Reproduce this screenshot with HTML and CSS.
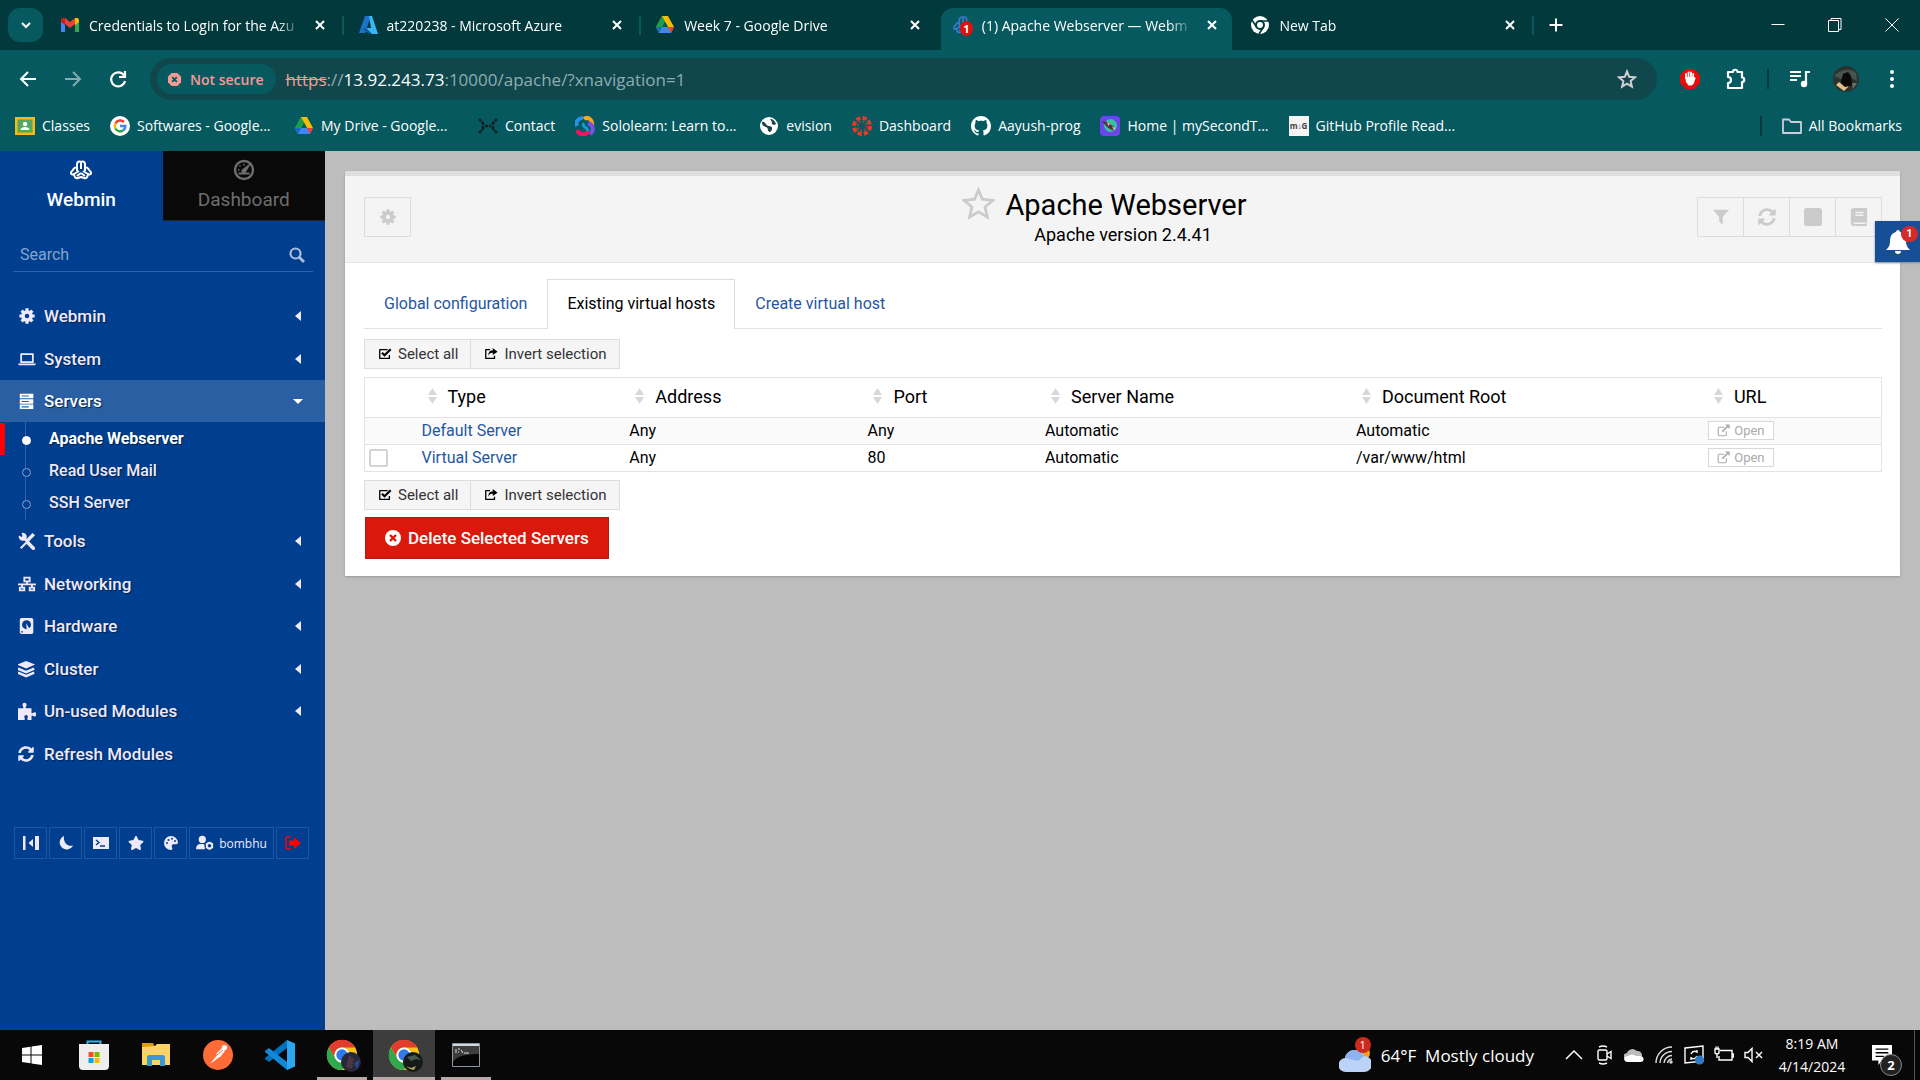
FILE: index.html
```html
<!DOCTYPE html>
<html lang="en">
<head>
<meta charset="utf-8">
<title>(1) Apache Webserver — Webmin</title>
<link rel="stylesheet" href="styles.css">
</head>
<body>

<!-- Shared icon shapes -->
<svg class="defs" aria-hidden="true">
  <symbol id="close" viewBox="0 0 20 20"><path d="M6 6l8 8M14 6l-8 8" fill="none" stroke="currentColor" stroke-width="2"/></symbol>
  <symbol id="drive" viewBox="0 0 20 20"><path d="M7 1h6L10 7 4 18 1 12z" fill="#34a853"/><path d="M7 1h6l6 11h-6L10 7z" fill="#fbbc04"/><path d="M1 12h18l-3 6H4z" fill="#4285f4"/><path d="M13 12h6l-3 6z" fill="#ea4335"/><path d="M10 6.500l3 5.500H7z" fill="#05595f"/><path d="M7 1l3 5.500L4 18l-3-6z" fill="#1e9e4a"/><path d="M1 12l3 6 3-6z" fill="#1967d2"/></symbol>
  <symbol id="cog" viewBox="0 0 20 20"><circle cx="10" cy="10" r="4.500" fill="none" stroke="currentColor" stroke-width="4"/><path d="M10 1.500v3M10 15.500v3M1.500 10h3M15.500 10h3M4 4l2 2M14 14l2 2M4 16l2-2M14 6l2-2" fill="none" stroke="currentColor" stroke-width="3.600"/></symbol>
  <symbol id="sync" viewBox="0 0 512 512"><path fill="currentColor" d="M370.720 133.280C339.458 104.008 298.888 87.962 255.848 88c-77.458.068-144.328 53.178-162.791 126.850-1.344 5.363-6.122 9.150-11.651 9.150H24.103c-7.498 0-13.194-6.807-11.807-14.176C33.933 94.924 134.813 8 256 8c66.448 0 126.791 26.136 171.315 68.685L463.030 40.970C478.149 25.851 504 36.559 504 57.941V192c0 13.255-10.745 24-24 24H345.941c-21.382 0-32.090-25.851-16.971-40.971l41.750-41.749zM32 296h134.059c21.382 0 32.090 25.851 16.971 40.971l-41.750 41.750c31.262 29.273 71.835 45.319 114.876 45.280 77.418-.070 144.315-53.144 162.787-126.849 1.344-5.363 6.122-9.150 11.651-9.150h57.304c7.498 0 13.194 6.807 11.807 14.176C478.067 417.076 377.187 504 256 504c-66.448 0-126.791-26.136-171.315-68.685L48.970 471.030C33.851 486.149 8 475.441 8 454.059V320c0-13.255 10.745-24 24-24z"/></symbol>
  <symbol id="webmin" viewBox="0 0 22 20"><path d="M7 11V4a2.500 2.500 0 0 1 4-2 2.500 2.500 0 0 1 4 2v7M11 3v6M7 7c-4 0-3 3-5.500 4.500C0 14 2 15 4 14l5-3M15 7c4 0 3 3 5.500 4.500C22 14 20 15 18 14l-5-3M4 14c0 3 2 5 4 4l3-1 3 1c2 1 4-1 4-4M11 13l-4 3M11 13l4 3" fill="none" stroke="currentColor" stroke-width="2" stroke-linejoin="round"/></symbol>
  <symbol id="check" viewBox="0 0 16 16"><path d="M13 9v4H2V3h9" fill="none" stroke="currentColor" stroke-width="1.500" stroke-linejoin="round"/><path d="M4.500 6.500l3 3 7-7" fill="none" stroke="currentColor" stroke-width="2.500"/></symbol>
  <symbol id="invert" viewBox="0 0 16 16"><path d="M7 3H2v10h10V10" fill="none" stroke="currentColor" stroke-width="1.500" stroke-linejoin="round"/><path d="M5 10c0-5 2-6 5-6V1l5.500 4.500L10 9V6.500c-2 0-4 .5-5 3.500z" fill="currentColor"/></symbol>
  <symbol id="open" viewBox="0 0 16 16"><path d="M9 4H3a2 2 0 0 0-1.500 2v7A1.500 1.500 0 0 0 3 14.500h7a1.500 1.500 0 0 0 1.500-1.500V9" fill="none" stroke="currentColor" stroke-width="1.400"/><path d="M6.500 9.500L14 2" stroke="currentColor" stroke-width="2"/><path d="M10 .5h5.500V6z" fill="currentColor"/></symbol>
  <symbol id="chrome" viewBox="0 0 36 36"><circle cx="18" cy="18" r="16" fill="#fbc116"/><path d="M4.100 10A16 16 0 0 1 32 10H18a8 8 0 0 0-7 12z" fill="#e33b2e"/><path d="M4.100 10A16 16 0 0 0 18 34l7-12a8 8 0 0 1-14 0z" fill="#2da94f"/><circle cx="18" cy="18" r="8" fill="#fff"/><circle cx="18" cy="18" r="6" fill="#2f7bea"/></symbol>
  <symbol id="left" viewBox="0 0 10 10"><path d="M8 0v10L2 5z" fill="currentColor"/></symbol>
  <symbol id="sort" viewBox="0 0 10 20"><path d="M5 1l5 8H0zM5 19l5-8H0z" fill="#d8d8d8"/></symbol>
</svg>

<header class="browser">
  <div class="tabstrip">
    <button class="tab-search" aria-label="Search tabs"><svg viewBox="0 0 20 20"><path d="M6 8l4 4 4-4" fill="none" stroke="currentColor" stroke-width="2"/></svg></button>
    <div class="tabs">
      <div class="tab">
        <svg viewBox="0 0 20 20"><path d="M1 5v12h4V9z" fill="#4285f4"/><path d="M19 5v12h-4V9z" fill="#34a853"/><path d="M1 4l4-1 5 4 5-4v6l-5 4-5-4-4-3z" fill="#ea4335"/><path d="M15 3l3 0 1 2v2l-4 3z" fill="#fbbc04"/><path d="M1 4l4-1v7L1 7z" fill="#c5221f"/></svg>
        <span class="tab-title">Credentials to Login for the Azu</span><button aria-label="Close tab"><svg><use href="#close"/></svg></button>
      </div>
      <div class="tab">
        <svg viewBox="0 0 20 20"><path d="M7 1h6L7 18H1z" fill="#1b74c9"/><path d="M11 1h3l6 18h-6L8 13h5z" fill="#38b6f5"/><path d="M4 14l4-1 6 6-4-1z" fill="#0f5ca8"/></svg>
        <span class="tab-title">at220238 - Microsoft Azure</span><button aria-label="Close tab"><svg><use href="#close"/></svg></button>
      </div>
      <div class="tab bare">
        <svg><use href="#drive"/></svg>
        <span class="tab-title">Week 7 - Google Drive</span><button aria-label="Close tab"><svg><use href="#close"/></svg></button>
      </div>
      <div class="tab active">
        <span class="favicon"><svg class="webmin-fav"><use href="#webmin"/></svg><b>1</b></span>
        <span class="tab-title">(1) Apache Webserver — Webm</span><button aria-label="Close tab"><svg><use href="#close"/></svg></button>
      </div>
      <div class="tab">
        <svg viewBox="0 0 20 20"><circle cx="10" cy="10" r="9" fill="#fff"/><circle cx="10" cy="10" r="4" fill="#fff" stroke="#02393d" stroke-width="2"/><path d="M10 6h9M6.500 12L2 5M13.500 12L9 19" stroke="#02393d" stroke-width="1.600"/></svg>
        <span class="tab-title">New Tab</span><button aria-label="Close tab"><svg><use href="#close"/></svg></button>
      </div>
    </div>
    <button class="new-tab" aria-label="New tab"><svg viewBox="0 0 20 20"><path d="M10 3.500v13M3.500 10h13" stroke="currentColor" stroke-width="2"/></svg></button>
    <div class="window-controls">
      <button aria-label="Minimize"><svg viewBox="0 0 20 20"><path d="M3.500 9.500h13" stroke="currentColor"/></svg></button>
      <button aria-label="Restore"><svg viewBox="0 0 20 20"><path d="M3.500 5.500h10v11h-10zM6 5.500v-2h10v11h-2.500" fill="none" stroke="currentColor"/></svg></button>
      <button aria-label="Close"><svg viewBox="0 0 20 20"><path d="M3.500 3.500l13 13M16.500 3.500l-13 13" stroke="currentColor"/></svg></button>
    </div>
  </div>

  <div class="toolbar">
    <button aria-label="Back"><svg viewBox="0 0 20 20"><path d="M18 10H3M10 3l-7 7 7 7" fill="none" stroke="currentColor" stroke-width="2"/></svg></button>
    <button class="dim" aria-label="Forward"><svg viewBox="0 0 20 20"><path d="M2 10h15M10 3l7 7-7 7" fill="none" stroke="currentColor" stroke-width="2"/></svg></button>
    <button aria-label="Reload"><svg viewBox="0 0 20 20"><path d="M16 6.500A7 7 0 1 0 17 12M17 2v6h-6" fill="none" stroke="currentColor" stroke-width="2.200"/></svg></button>
    <div class="omnibox">
      <button class="chip"><svg viewBox="0 0 16 16"><path d="M5 1h6l4 4v6l-4 4H5l-4-4V5z" fill="#f69a94"/><path d="M5.500 5.500l5 5M10.500 5.500l-5 5" stroke="#05595f" stroke-width="2"/></svg>Not secure</button>
      <span class="url"><s>https</s>://<b>13.92.243.73</b>:10000/apache/?xnavigation=1</span>
      <button aria-label="Bookmark this tab"><svg viewBox="0 0 20 20"><path d="M10 2.500l2.200 5.300 5.800.5-4.400 3.800 1.300 5.600-4.900-3-4.900 3 1.300-5.600L2 8.300l5.800-.5z" fill="none" stroke="#d0d0d0" stroke-width="2"/></svg></button>
    </div>
    <div class="extensions">
      <button aria-label="Ad blocker"><svg viewBox="0 0 20 20"><path d="M6 0h8l6 6v8l-6 6H6l-6-6V6z" fill="#ea0c0c"/><path d="M6 9v-4M8.500 9V3.500M11 9V3.500M13.200 10V5" stroke="#fff" stroke-width="1.800" stroke-linecap="round"/><path d="M5.200 8h9l1.500 1-2.200 6-2 1.500h-3L6 13z" fill="#fff"/></svg></button>
      <button aria-label="Extensions"><svg class="i22" viewBox="0 0 22 22"><path d="M3 4h5a2.200 2.200 0 0 1 4.500 0H17v5.500a2.200 2.200 0 0 1 0 4.500v6H3v-5a3 3 0 0 0 0-6z" fill="none" stroke="currentColor" stroke-width="2.200" stroke-linejoin="round"/></svg></button>
      <span class="divider"></span>
      <button aria-label="Media controls"><svg class="i22" viewBox="0 0 22 22"><path d="M1 4h11M1 8h11M1 12h7M17 16V4h4" fill="none" stroke="currentColor" stroke-width="2.200"/><circle cx="15" cy="16" r="3.200" fill="currentColor"/></svg></button>
      <button aria-label="Profile"><svg class="i26" viewBox="0 0 26 26"><circle cx="13" cy="13" r="13" fill="#2b332f"/><path d="M1 10c5-6 16-9 22-3l1 8-7-4-9 2z" fill="#46544f"/><path d="M10 8l5-2 3 4 1 9-8 4-3-7z" fill="#0c0a09"/><path d="M3 19l3-3 6 5 4-1-5 5z" fill="#e6c088"/><path d="M19 17l5 0-4 6z" fill="#66706b"/></svg></button>
      <button aria-label="Menu"><svg viewBox="0 0 20 20"><circle cx="10" cy="3" r="2" fill="currentColor"/><circle cx="10" cy="10" r="2" fill="currentColor"/><circle cx="10" cy="17" r="2" fill="currentColor"/></svg></button>
    </div>
  </div>

  <nav class="bookmarks" aria-label="Bookmarks">
    <a href="#"><svg viewBox="0 0 20 20"><path d="M0 1h20v18H0z" fill="#f5ba16"/><path d="M2.500 3.500h15v13h-15z" fill="#57a463"/><circle cx="10" cy="8" r="2.200" fill="#fff"/><path d="M5.500 14c0-4 9-4 9 0z" fill="#fff"/></svg>Classes</a>
    <a class="long" href="#"><svg viewBox="0 0 20 20"><circle cx="10" cy="10" r="10" fill="#fff"/><path d="M5.500 7.500A5.300 5.300 0 0 1 14 6" fill="none" stroke="#ea4335" stroke-width="2.600"/><path d="M5.400 12.500a5.500 5.500 0 0 1 0-5" fill="none" stroke="#fbbc04" stroke-width="2.600"/><path d="M13.600 14a5.300 5.300 0 0 1-8.200-1.500" fill="none" stroke="#34a853" stroke-width="2.600"/><path d="M10 10h5.300a5.300 5.300 0 0 1-1.700 4" fill="none" stroke="#4285f4" stroke-width="2.600"/></svg>Softwares - Google...</a>
    <a class="long" href="#"><svg><use href="#drive"/></svg>My Drive - Google...</a>
    <a href="#"><svg viewBox="0 0 20 20"><path d="M1 3l4 4M1 17l4-4M19 3l-4 4M19 17l-4-4M5 6v8M15 6v8M7 10h6" stroke="#111c20" stroke-width="2.400" stroke-dasharray="3 1"/></svg>Contact</a>
    <a class="long" href="#"><svg viewBox="0 0 20 20" fill="none" stroke-width="4"><path d="M9 3c4-3 9 1 8 6" stroke="#f9a61a"/><path d="M2 10C0 5 4 2 8 2" stroke="#2b8fe6"/><path d="M13 7c6 2 6 8 2 11" stroke="#7a52e0"/><path d="M2 14c3 6 10 5 11 1" stroke="#f2145f"/><path d="M9 7c-3 4 4 4 4 8" stroke="#149ad8" stroke-width="3"/></svg>Sololearn: Learn to...</a>
    <a href="#"><svg viewBox="0 0 20 20"><circle cx="10" cy="10" r="9" fill="#fff"/><path d="M3 6c4-1 3 4 7 4s4 4 1 6c-3 0-1-4-4-5S3 9 3 6zM11 3c3 0 5 2 6 5-3 2-5 0-4-2z" fill="#1c4147"/></svg>evision</a>
    <a href="#"><svg viewBox="0 0 20 20"><circle cx="10" cy="10" r="8" fill="none" stroke="#e23c28" stroke-width="4" stroke-dasharray="4.300 2"/><circle cx="10" cy="10" r="4.500" fill="none" stroke="#e23c28" stroke-width="1.500" stroke-dasharray="1.500 2"/></svg>Dashboard</a>
    <a href="#"><svg viewBox="0 0 16 16"><path fill="#fff" d="M8 0C3.580 0 0 3.580 0 8c0 3.540 2.290 6.530 5.470 7.590.4.070.550-.170.550-.380 0-.190-.010-.820-.010-1.490-2.010.370-2.530-.490-2.690-.940-.090-.230-.480-.940-.820-1.130-.280-.150-.680-.520-.010-.530.630-.010 1.080.580 1.230.820.720 1.210 1.870.870 2.330.660.070-.520.280-.870.510-1.070-1.780-.2-3.640-.890-3.640-3.950 0-.870.310-1.590.820-2.150-.080-.2-.360-1.020.080-2.120 0 0 .670-.210 2.200.820.640-.180 1.320-.270 2-.270s1.360.090 2 .270c1.530-1.040 2.200-.820 2.200-.820.440 1.100.160 1.920.080 2.120.510.560.820 1.270.820 2.150 0 3.070-1.870 3.750-3.650 3.950.290.250.540.730.540 1.480 0 1.070-.010 1.930-.010 2.200 0 .210.150.460.550.380A8.010 8.010 0 0 0 16 8c0-4.420-3.580-8-8-8z"/></svg>Aayush-prog</a>
    <a class="long" href="#"><svg viewBox="0 0 20 20"><rect width="20" height="20" rx="4" fill="#6c45e8"/><circle cx="10.500" cy="9.500" r="6.500" fill="#35c2a4"/><path d="M2 5l6 1 3 3 3 1v5l-4-2-3-2z" fill="#4a3540"/><path d="M7 5l3 3-2 2zM12 10l3 2-1 3z" fill="#f0b49c"/></svg>Home | mySecondT...</a>
    <a class="long" href="#"><span class="md-icon">m↓G</span>GitHub Profile Read...</a>
    <span class="spacer"></span>
    <span class="divider"></span>
    <a class="all" href="#"><svg viewBox="0 0 20 20"><path d="M1 3.500h6l2 2.500h10v11H1z" fill="none" stroke="#ccd" stroke-width="1.800" stroke-linejoin="round"/></svg>All Bookmarks</a>
  </nav>
</header>

<main class="page">
  <aside class="sidebar">
    <div class="product-tabs">
      <button class="product active"><svg class="i22"><use href="#webmin"/></svg>Webmin</button>
      <button class="product"><svg class="i22" viewBox="0 0 22 22"><circle cx="11" cy="11" r="9" fill="none" stroke="currentColor" stroke-width="2.400"/><path d="M5 11h1.500M6.500 6.500l1 1M11 5v1.500" stroke="currentColor" stroke-width="1.600"/><path d="M19 3l-6.500 10.500a2.200 2.200 0 0 1-3.500-3z" fill="currentColor"/><path d="M5.500 14.500h11" stroke="currentColor" stroke-width="2"/></svg>Dashboard</button>
    </div>
    <label class="search"><input type="text" placeholder="Search" aria-label="Search"><svg viewBox="0 0 16 16"><circle cx="6.500" cy="6.500" r="5" fill="none" stroke="currentColor" stroke-width="2.200"/><path d="M10 10l5 5" stroke="currentColor" stroke-width="2.800"/></svg></label>
    <ul class="menu">
      <li><a href="#"><svg><use href="#cog"/></svg>Webmin<svg class="caret"><use href="#left"/></svg></a></li>
      <li><a href="#"><svg viewBox="0 0 20 20"><path d="M3.500 4.500h13v9h-13z" fill="none" stroke="currentColor" stroke-width="2" stroke-linejoin="round"/><path d="M0 15h20l-1 2H1z" fill="currentColor"/></svg>System<svg class="caret"><use href="#left"/></svg></a></li>
      <li class="open"><a href="#"><svg viewBox="0 0 20 20"><path d="M2 2h15v5H2zM2 8h15v5H2zM2 14h15v5H2z" fill="currentColor"/><path d="M4 4.500h8M4 10.500h8M4 16.500h8" stroke="#2b5fa3" stroke-width="1.200"/></svg>Servers<svg class="caret" viewBox="0 0 10 10"><path d="M0 3h10L5 8z" fill="currentColor"/></svg></a>
        <ul class="submenu">
          <li class="current"><a href="#">Apache Webserver</a></li>
          <li><a href="#">Read User Mail</a></li>
          <li><a href="#">SSH Server</a></li>
        </ul>
      </li>
      <li><a href="#"><svg viewBox="0 0 20 20"><path d="M3 18L13 8" stroke="currentColor" stroke-width="2.200"/><path d="M16 1l3 2.500L10.500 12 8 9.500z" fill="currentColor"/><path d="M11 12l6 6" stroke="currentColor" stroke-width="4" stroke-linecap="round"/><path d="M6 6l4 4" stroke="currentColor" stroke-width="3"/><path d="M4 1a4.500 4.500 0 1 1-3 3l3 1.500 1-1z" fill="currentColor"/></svg>Tools<svg class="caret"><use href="#left"/></svg></a></li>
      <li><a href="#"><svg viewBox="0 0 20 20" fill="none" stroke="currentColor" stroke-width="2"><path d="M7 3h6v4H7zM2 14h5v3H2zM13 14h5v3h-5zM0 10.500h20M10 7v3.500M4.500 10v4M15.500 10v4"/></svg>Networking<svg class="caret"><use href="#left"/></svg></a></li>
      <li><a href="#"><svg viewBox="0 0 20 20"><path d="M4 1h11a2 2 0 0 1 2 2v14a2 2 0 0 1-2 2H4a2 2 0 0 1-2-2V3a2 2 0 0 1 2-2z" fill="currentColor"/><circle cx="9.500" cy="8.500" r="5" fill="#003f8f"/><path d="M9 7l5 8-4 1z" fill="currentColor"/><circle cx="4.500" cy="16.500" r="1" fill="#003f8f"/></svg>Hardware<svg class="caret"><use href="#left"/></svg></a></li>
      <li><a href="#"><svg viewBox="0 0 20 20"><path d="M9 1l10 4-10 4.500L-1 5z" fill="currentColor"/><path d="M0 9.500l9 4 9-4M0 14l9 4 9-4" fill="none" stroke="currentColor" stroke-width="2.800"/></svg>Cluster<svg class="caret"><use href="#left"/></svg></a></li>
      <li><a href="#"><svg viewBox="0 0 20 20"><path d="M0 7h5.500C7 6 5 5 5 3a2.200 2.200 0 0 1 4.500 0c0 2-2 3-.5 4H15v5c1 1.500 2-.5 3.500-.5a2 2 0 0 1 0 4.500C17 16 16 14 15 15.500V20h-4c-1.500-1 0-2 0-3.500a2 2 0 0 0-4 0C7 18 8.500 19 7 20H0z" fill="currentColor"/></svg>Un-used Modules<svg class="caret"><use href="#left"/></svg></a></li>
      <li><a href="#"><svg class="sync"><use href="#sync"/></svg>Refresh Modules</a></li>
    </ul>
    <div class="quick">
      <button aria-label="Toggle sidebar"><svg viewBox="0 0 16 16"><path d="M0 1h2.500v14H0zM12 1h4v14h-4zM10 4v8L5.500 8z" fill="currentColor"/></svg></button>
      <button aria-label="Night mode"><svg viewBox="0 0 16 16"><path d="M6 1a7 7 0 1 0 9 9.500C10 12 5 8 6 1z" fill="currentColor"/></svg></button>
      <button aria-label="Terminal"><svg viewBox="0 0 16 16"><path d="M0 2h16v12H0z" fill="currentColor"/><path d="M3 5l3 2.500L3 10M7 11h5" fill="none" stroke="#003f8f" stroke-width="1.400"/></svg></button>
      <button aria-label="Favorites"><svg viewBox="0 0 576 512"><path fill="currentColor" d="M259.300 17.800L194 150.200 47.900 171.500c-26.200 3.800-36.700 36.100-17.700 54.600l105.700 103-25 145.500c-4.500 26.300 23.200 46 46.400 33.700L288 439.600l130.700 68.700c23.200 12.200 50.900-7.400 46.400-33.700l-25-145.500 105.700-103c19-18.500 8.500-50.800-17.700-54.600L382 150.200 316.700 17.800c-11.700-23.600-45.600-23.900-57.400 0z"/></svg></button>
      <button aria-label="Theme"><svg viewBox="0 0 16 16"><path d="M8 1a7 7 0 0 1 7 6c0 4-5 1-6 3s2 5-1 5A7 7 0 0 1 8 1z" fill="currentColor"/><g fill="#003f8f"><circle cx="4" cy="8" r="1"/><circle cx="5.500" cy="5" r="1"/><circle cx="9" cy="3.800" r="1"/><circle cx="12" cy="6" r="1"/></g></svg></button>
      <button class="user"><svg viewBox="0 0 20 16"><circle cx="7" cy="4" r="4" fill="currentColor"/><path d="M0 15c0-4 2-6 5-6h4l1 6z" fill="currentColor"/><circle cx="15" cy="11" r="3" fill="none" stroke="currentColor" stroke-width="2.200"/><path d="M15 6.500v9M11 8.700l8 4.600M19 8.700l-8 4.600" stroke="currentColor" stroke-width="1.500" stroke-dasharray="2 5.200 2"/></svg>bombhu</button>
      <button class="logout" aria-label="Log out"><svg viewBox="0 0 16 16"><path d="M6 2H3a2 2 0 0 0-2 2v8a2 2 0 0 0 2 2h3" fill="none" stroke="currentColor" stroke-width="1.500"/><path d="M4 5.500h5V2l7 6-7 6v-3.500H4z" fill="currentColor"/></svg></button>
    </div>
  </aside>

  <section class="content">
    <div class="panel">
      <div class="panel-head">
        <div><button class="tool" aria-label="Module config"><svg><use href="#cog"/></svg></button></div>
        <div class="heading">
          <h1><svg viewBox="0 0 34 34"><path d="M17 3l4 9.500 11 1.200-8.300 6.800 2.500 10.500-9.200-5.500L7.800 31l2.500-10.500L2 13.700l11-1.200z" fill="none" stroke="#cbcbcb" stroke-width="2.800"/></svg>Apache Webserver</h1>
          <p>Apache version 2.4.41</p>
        </div>
        <div class="tools">
          <button class="tool" aria-label="Filter"><svg viewBox="0 0 20 20"><path d="M1 2h18l-7 8v9l-4-4v-5z" fill="currentColor"/></svg></button>
          <button class="tool" aria-label="Restart"><svg><use href="#sync"/></svg></button>
          <button class="tool" aria-label="Stop"><svg viewBox="0 0 20 20"><rect width="20" height="20" rx="3" fill="currentColor"/></svg></button>
          <button class="tool" aria-label="Documentation"><svg viewBox="0 0 20 20"><path d="M4 0h15v15l-1 1 1 3v1H4a3 3 0 0 1-3-3V3a3 3 0 0 1 3-3z" fill="currentColor"/><path d="M6 5h9M6 8h9M4 17h13" stroke="#f4f4f4" stroke-width="1.600"/></svg></button>
        </div>
      </div>

      <div class="panel-body">
        <nav class="tabbar">
          <a href="#">Global configuration</a>
          <a href="#" class="active">Existing virtual hosts</a>
          <a href="#">Create virtual host</a>
        </nav>

        <div class="select-row">
          <button><svg><use href="#check"/></svg>Select all</button><button><svg><use href="#invert"/></svg>Invert selection</button>
        </div>

        <table class="hosts">
          <colgroup><col class="c-check"><col class="c-type"><col class="c-addr"><col class="c-port"><col class="c-name"><col class="c-root"><col></colgroup>
          <thead>
            <tr><th></th><th><svg><use href="#sort"/></svg>Type</th><th><svg><use href="#sort"/></svg>Address</th><th><svg><use href="#sort"/></svg>Port</th><th><svg><use href="#sort"/></svg>Server Name</th><th><svg><use href="#sort"/></svg>Document Root</th><th><svg><use href="#sort"/></svg>URL</th></tr>
          </thead>
          <tbody>
            <tr><td></td><td><a href="#">Default Server</a></td><td>Any</td><td>Any</td><td>Automatic</td><td>Automatic</td><td><button class="open-btn"><svg><use href="#open"/></svg>Open</button></td></tr>
            <tr><td><input type="checkbox" aria-label="Select virtual server"></td><td><a href="#">Virtual Server</a></td><td>Any</td><td>80</td><td>Automatic</td><td>/var/www/html</td><td><button class="open-btn"><svg><use href="#open"/></svg>Open</button></td></tr>
          </tbody>
        </table>

        <div class="select-row">
          <button><svg><use href="#check"/></svg>Select all</button><button><svg><use href="#invert"/></svg>Invert selection</button>
        </div>
        <button class="delete"><svg viewBox="0 0 16 16"><circle cx="8" cy="8" r="8" fill="#fff"/><path d="M5 5l6 6M11 5l-6 6" stroke="#d9190b" stroke-width="2.400"/></svg>Delete Selected Servers</button>
      </div>
    </div>
    <button class="bell" aria-label="Notifications"><svg viewBox="0 0 24 26"><path d="M12 1c1.200 0 2 1 2 2 4 1 6 4 6 9 0 4 1 6 4 9H0c3-3 4-5 4-9 0-5 2-8 6-9 0-1 .8-2 2-2z" fill="#fff"/><path d="M9 22h6a3 3 0 0 1-6 0z" fill="#fff"/></svg><b>1</b></button>
  </section>
</main>

<footer class="taskbar">
  <button aria-label="Start"><svg viewBox="0 0 20 20"><path d="M0 3l8.500-1.200V9.500H0zM9.500 1.600L20 0v9.500H9.500zM0 10.500h8.500v7.700L0 17zM9.500 10.500H20V20L9.500 18.400z" fill="#fff"/></svg></button>
  <button aria-label="Store"><svg class="i30" viewBox="0 0 30 30"><path d="M8.500 5V1.500h13V5" fill="none" stroke="#3ab0e8" stroke-width="2"/><path d="M0 4h30v22a4 4 0 0 1-4 4H4a4 4 0 0 1-4-4z" fill="#eee"/><path d="M9.500 12h5v5h-5z" fill="#f25022"/><path d="M15.500 12h5v5h-5z" fill="#7fba00"/><path d="M9.500 18h5v5h-5z" fill="#00a4ef"/><path d="M15.500 18h5v5h-5z" fill="#ffb900"/></svg></button>
  <button aria-label="Explorer"><svg class="i30" viewBox="0 0 30 30"><path d="M1 3h11l2 4H1z" fill="#dd9c0c"/><path d="M1 7l13-1 2-2h13v21H1z" fill="#fdd267"/><path d="M6 26V17a2 2 0 0 1 2-2h14a2 2 0 0 1 2 2v9h-5v-6h-8v6z" fill="#3b96da"/></svg></button>
  <button aria-label="Postman"><svg class="i30" viewBox="0 0 30 30"><circle cx="15" cy="15" r="15" fill="#ff6c37"/><path d="M7 24l8-10 3 2z" fill="#fff"/><path d="M13 14l6-6 3 3-5 6z" fill="#fff"/><circle cx="21.500" cy="7.500" r="2.600" fill="#fff"/><path d="M14 15l6-5" stroke="#ff6c37"/></svg></button>
  <button aria-label="VS Code"><svg class="i30" viewBox="0 0 30 30"><path d="M22 0v8L4 22l-4-3v-1z" fill="#0072bd"/><path d="M22 30v-8L4 8l-4 3v1z" fill="#1287d4"/><path d="M22 0l8 3.500v23L22 30z" fill="#2ba7f2"/></svg></button>
  <button class="running" aria-label="Chrome"><svg class="i36"><use href="#chrome"/></svg><svg class="avatar" viewBox="0 0 20 20"><circle cx="10" cy="10" r="10" fill="#26263c"/><path d="M8 3l5 4-2 10-6-2z" fill="#4a3540"/><path d="M13 11l6-3-3 9z" fill="#234a8c"/></svg></button>
  <button class="running focused" aria-label="Chrome"><svg class="i36"><use href="#chrome"/></svg><svg class="avatar" viewBox="0 0 20 20"><circle cx="10" cy="10" r="10" fill="#141a16"/><path d="M4 5l8-2 6 5-5-1-5 2z" fill="#4b5a50"/><path d="M3 14l5 2 5-2-2 4-4-1z" fill="#b9a565"/></svg></button>
  <button class="running" aria-label="Command prompt"><svg class="i28" viewBox="0 0 28 24"><path d="M.5.5h27v23H.5z" fill="#050505" stroke="#8b97a3"/><path d="M1 1h26v2H1z" fill="#cfd6dc"/><path d="M1 3h26v8C15 11 4 13 1 19z" fill="#3d3d3d"/><path d="M4 6v4M6 6h2M6 9h1M9 7l2 3M12 10h5" stroke="#ddd"/></svg></button>

  <span class="spacer"></span>
  <button class="weather"><span class="cloud"><svg viewBox="0 0 32 36"><circle cx="24" cy="16" r="7" fill="#f5a11c"/><path d="M7 35a7 7 0 0 1-1-14 10 10 0 0 1 19-2 8 8 0 0 1 0 16z" fill="#bcd3f7"/><path d="M6 21a10 10 0 0 1 19-2l-6 5z" fill="#8db4ef"/></svg><b>1</b></span>64°F&nbsp; Mostly cloudy</button>
  <div class="tray">
    <svg viewBox="0 0 20 20"><path d="M2 14l8-8 8 8" fill="none" stroke="#fff" stroke-width="1.500"/></svg>
    <svg viewBox="0 0 20 20" fill="none" stroke="#fff" stroke-width="1.400"><rect x="4" y="5" width="9" height="10" rx="1.500"/><path d="M13 9l4-2.500v7L13 11M5 2q4-2 8 0M5 18q4 2 8 0"/></svg>
    <svg viewBox="0 0 20 20"><path d="M4 16a4 4 0 0 1-1-8 6 6 0 0 1 10-2 4.500 4.500 0 0 1 5 5z" fill="#bbb"/><path d="M3 17a3 3 0 0 1 1-6q4-3 8 0h4a3 3 0 0 1 1 6z" fill="#fff"/></svg>
    <svg viewBox="0 0 20 20" fill="none" stroke="#ddd" stroke-width="1.400"><path d="M2 18A16 16 0 0 1 18 2M6 18A12 12 0 0 1 18 6.500M10 18a8 8 0 0 1 8-7.500M13.500 18a5 5 0 0 1 4.500-4"/><circle cx="17" cy="17" r="1"/></svg>
    <svg viewBox="0 0 20 20"><path d="M1 3l18-2v15L1 18z" fill="none" stroke="#fff" stroke-width="1.400"/><path d="M7 9q2-4 6-2V5M13 11q-2 4-6 2v2" fill="none" stroke="#fff" stroke-width="1.400"/><circle cx="15.500" cy="15" r="4.500" fill="#2f7ac6"/></svg>
    <svg viewBox="0 0 20 20" fill="none" stroke="#fff" stroke-width="1.400"><path d="M6 5.500h12v9.500H5V11M18 9h1.500v3H18M1 4v4q2 2 4 0V4zM2 4V1.500M4 4V1.500M3 9v4"/></svg>
    <svg viewBox="0 0 20 20" fill="none" stroke="#fff" stroke-width="1.400"><path d="M1 7.500h3l4-4v13l-4-4H1zM12 7l6 6M18 7l-6 6"/></svg>
  </div>
  <div class="clock"><time>8:19 AM</time><time>4/14/2024</time></div>
  <button class="action" aria-label="Notifications"><svg viewBox="0 0 22 22"><path d="M0 0h22v17H11l-4 5v-5H0z" fill="#fff"/><path d="M4 4.500h14M4 8.500h14M4 12.500h9" stroke="#000" stroke-width="1.500"/></svg><b>2</b></button>
</footer>
</body>
</html>
```
FILE: styles.css
```css
* { box-sizing: border-box; }
body {
  margin: 0;
  min-height: 100vh;
  display: flex;
  flex-direction: column;
  font-family: Roboto, "Liberation Sans", sans-serif;
  font-size: 16px;
  color: #000;
}
button { font: inherit; color: inherit; background: none; border: 0; padding: 0; display: inline-flex; align-items: center; justify-content: center; }
a { text-decoration: none; color: inherit; }
ul { list-style: none; margin: 0; padding: 0; }
svg { flex: none; width: 20px; height: 20px; }
.defs { position: absolute; width: 0; height: 0; }
.spacer { flex: 1; }
.i22 { width: 22px; height: 22px; }
.i26 { width: 26px; height: 26px; }
.i28 { width: 28px; height: 24px; }
.i30 { width: 30px; height: 30px; }
.i36 { width: 34px; height: 34px; }

/* Browser window */
.browser { font-family: "Open Sans", "Noto Sans", sans-serif; font-size: 14px; color: #fff; background: #05595f; }
.tabstrip { height: 50px; display: flex; align-items: center; background: #02393d; padding-left: 8px; }
.tab-search { width: 35px; height: 34px; border-radius: 12px; background: #05595f; }
.tabs { flex: 0 1 1488px; min-width: 0; display: flex; align-self: stretch; padding-top: 8px; margin-left: 5px; }
.tab { flex: 1; min-width: 0; display: flex; align-items: center; gap: 9px; padding: 0 16px 8px 12px; position: relative; }
.tab::after { content: ""; position: absolute; right: 2px; top: 8px; width: 2px; height: 19px; background: #05595f; }
.tab.bare::after, .tab.active::after { display: none; }
.tab.active { background: #05595f; border-radius: 12px 12px 0 0; margin-right: 6px; padding-right: 10px; }
.tab-title { flex: 1; min-width: 0; overflow: hidden; white-space: nowrap; mask-image: linear-gradient(90deg, #000 calc(100% - 24px), transparent); }
.favicon { position: relative; display: flex; width: 20px; }
.webmin-fav { color: #3978c6; }
.favicon b { position: absolute; left: 7px; top: 6px; width: 13px; height: 15px; border-radius: 7px; background: #d9120d; font-size: 11px; line-height: 15px; text-align: center; }
.new-tab { margin-left: 10px; }
.window-controls { margin-left: auto; display: flex; }
.window-controls button { width: 57px; height: 50px; }

.toolbar { height: 58px; display: flex; align-items: center; padding: 0 5px 0 10px; }
.toolbar > button { width: 36px; margin-right: 9px; }
.toolbar .dim { opacity: .5; }
.omnibox { flex: 1; display: flex; align-items: center; height: 42px; margin-left: 5px; padding: 0 20px 0 7px; border-radius: 21px; background: #10474d; }
.chip { height: 30px; padding: 0 12px 0 10px; gap: 8px; border-radius: 15px; background: #05595f; color: #f69a94; font-weight: 600; white-space: nowrap; }
.chip svg { width: 15px; height: 15px; }
.url { flex: 1; margin-left: 10px; font-size: 17px; color: #8fadb0; }
.url s { color: #f69a94; }
.url b { color: #fff; font-weight: 400; }
.extensions { display: flex; align-items: center; margin-left: 10px; }
.extensions button { width: 46px; }
.divider { width: 2px; height: 20px; background: #02393d; }
.extensions .divider { margin: 0 8px; }

.bookmarks { height: 43px; display: flex; align-items: center; padding: 0 18px 8px 15px; gap: 20px; white-space: nowrap; }
.bookmarks a { display: flex; align-items: center; gap: 7px; }
.bookmarks .long { min-width: 164px; }
.md-icon { width: 20px; height: 20px; background: #f4f4f4; color: #444; font-size: 8px; font-weight: 700; line-height: 20px; text-align: center; }

/* Page */
.page { flex: 1; display: flex; background: #bdbdbd; }
.sidebar { flex: none; width: 325px; background: #003f8f; color: #efe9fa; }
.product-tabs { display: flex; height: 70px; font-size: 19px; }
.product { flex: 1; flex-direction: column; gap: 7px; background: #090909; color: #6e6e6e; border-bottom: 1px solid #222; font-weight: 400; line-height: 24px; }
.product.active { background: none; color: #fff; border-color: transparent; font-weight: 500; }
.search { display: flex; align-items: center; height: 34px; margin: 17px 12px 23px 13px; padding: 0 8px 0 7px; border-bottom: 1px solid #2a62ab; color: #a9bddc; }
.search input { flex: 1; min-width: 0; border: 0; padding: 0; background: none; font: inherit; color: inherit; outline: 0; }
.search input::placeholder { color: #87a3ce; opacity: 1; }
.search svg { width: 16px; height: 16px; }

.menu > li > a { display: flex; align-items: center; height: 42px; padding: 0 22px 0 18px; font-size: 17px; font-weight: 500; text-shadow: 1px 1px 1px #00224f; }
.menu > li:nth-child(2), .menu > li:nth-child(n+5):nth-child(odd) { margin-top: 1px; }
.menu > li > a > svg:first-child { width: 18px; height: 18px; margin-right: 8px; }
.menu > li > a > svg.sync:first-child { width: 16px; height: 16px; margin-right: 10px; }
.menu > li > a > .caret { width: 10px; height: 10px; margin-left: auto; }
.menu .open > a { background: #2b5fa3; color: #fff; }
.submenu { position: relative; padding: 1px 0; }
.submenu::before { content: ""; position: absolute; left: 25px; top: 0; bottom: 0; width: 1px; background: #2a62ab; }
.submenu li { position: relative; height: 32px; padding-left: 49px; line-height: 32px; font-weight: 500; text-shadow: 1px 1px 1px #00224f; }
.submenu li::before { content: ""; position: absolute; left: 22px; top: 13px; width: 7px; height: 7px; border-radius: 50%; border: 1px solid #87a3ce; background: #003f8f; }
.submenu .current { border-left: 5px solid #f00; padding-left: 44px; color: #fff; font-weight: 700; }
.submenu .current::before { left: 17px; background: #fff; border-color: #fff; }

.quick { display: flex; gap: 2px; margin: 52px 0 0 14px; }
.quick button { width: 33px; height: 32px; border: 1px solid #1f55a0; }
.quick svg { width: 16px; height: 16px; }
.quick .user { width: 85px; gap: 5px; font-family: "Open Sans", "Noto Sans", sans-serif; font-size: 12px; }
.quick .user svg { width: 18px; }
.quick .logout { color: #f00; }

.content { position: relative; flex: 1; min-width: 0; padding: 20px 20px 0; }
.panel { border-top: 5px solid #dedede; background: #fff; box-shadow: 0 1px 2px #999; }
.panel-head { display: grid; grid-template-columns: 1fr auto 1fr; height: 87px; padding: 0 18px 0 19px; background: #f4f4f4; border-bottom: 1px solid #e6e6e6; }
.panel-head > div { padding-top: 21px; }
.tool { width: 47px; height: 40px; border: 1px solid #ddd; color: #cbcbcb; }
.tool svg { width: 18px; height: 18px; }
.tools { display: flex; justify-content: flex-end; }
.tools .tool + .tool { margin-left: -1px; }
.panel-head .heading { padding-top: 11px; text-align: center; }
.heading h1 { display: flex; align-items: flex-start; gap: 10px; margin: 0; padding-right: 37px; font-size: 29px; font-weight: 400; line-height: 36px; }
.heading h1 svg { width: 33px; height: 33px; }
.heading p { margin: 0; font-size: 18px; line-height: 24px; }
.panel-body { padding: 16px 18px 17px 19px; }
.tabbar { display: flex; border-bottom: 1px solid #e3e3e3; color: #1f57a4; }
.tabbar a { height: 50px; line-height: 48px; padding: 0 19px; border: 1px solid transparent; border-bottom: 0; margin-bottom: -1px; }
.tabbar .active { color: #000; border-color: #ddd; background: #fff; }
.select-row { display: flex; margin: 10px 0 8px; }
.hosts + .select-row { margin: 8px 0 7px; }
.select-row button { height: 30px; padding: 0 12px 0 13px; gap: 6px; border: 1px solid #ddd; background: #f5f5f5; color: #333; font-size: 15px; }
.select-row button + button { margin-left: -1px; }
.select-row svg { width: 14px; height: 14px; color: #000; }
.hosts { width: 100%; table-layout: fixed; border-collapse: collapse; border: 1px solid #e3e3e3; }
.c-check { width: 51px; } .c-type { width: 13.7%; } .c-addr { width: 15.7%; } .c-port { width: 11.7%; } .c-name { width: 20.5%; } .c-root { width: 23.2%; }
.hosts th { height: 40px; padding: 0 0 2px 12px; text-align: left; font-size: 18px; font-weight: 400; }
.hosts th svg { width: 9px; height: 18px; margin-right: 11px; vertical-align: -2px; }
.hosts tr { border-bottom: 1px solid #e3e3e3; }
.hosts td { height: 27px; padding: 0 0 2px 6px; }
.hosts tbody tr:first-child { background: #fafafa; }
.hosts td a { color: #1f57a4; }
.hosts input { appearance: none; display: block; width: 19px; height: 18px; margin: 2px 0 0 -2px; border: 2px solid #d4d4d4; border-radius: 2px; background: #fff; }
.open-btn { width: 66px; height: 19px; gap: 4px; border: 1px solid #d8d8d8; background: #fff; color: #aaa; font-size: 13px; vertical-align: middle; }
.open-btn svg { width: 13px; height: 13px; }
.delete { height: 42px; margin-left: 1px; padding: 0 19px; gap: 7px; border: 1px solid #b5180d; background: #d9190b; color: #fff; font-size: 17px; font-weight: 500; display: flex; }
.delete svg { width: 16px; height: 16px; }
.bell { position: absolute; right: 0; top: 70px; width: 45px; height: 41px; background: #174f96; box-shadow: 0 1px 2px #888; }
.bell svg { width: 24px; height: 26px; }
.bell b { position: absolute; right: 2px; top: 5px; width: 17px; height: 16px; border-radius: 8px; background: #d42a2a; color: #fff; font-size: 11px; line-height: 16px; }

/* Taskbar */
.taskbar { height: 50px; display: flex; align-items: stretch; padding-left: 1px; background: #080808; color: #fff; font-family: "Open Sans", "Noto Sans", sans-serif; }
.taskbar > button { width: 62px; position: relative; }
.taskbar .running::after { content: ""; position: absolute; left: 6px; right: 6px; bottom: 0; height: 3px; background: #baa8a8; }
.taskbar .focused { background: #3d3d3d; }
.taskbar .focused::after { left: 0; right: 0; }
.taskbar .avatar { position: absolute; left: 30px; top: 22px; }
.taskbar .weather { width: auto; gap: 10px; font-size: 17px; white-space: nowrap; }
.cloud { position: relative; display: flex; }
.cloud svg { width: 32px; height: 36px; }
.cloud b { position: absolute; right: 0; top: 0; width: 16px; height: 16px; border-radius: 8px; background: #cf2a1e; font-size: 11px; font-weight: 400; line-height: 16px; }
.tray { display: flex; align-items: center; gap: 10px; margin: 0 11px 0 30px; }
.clock { display: flex; flex-direction: column; justify-content: center; align-items: center; width: 74px; font-size: 14px; line-height: 23px; white-space: nowrap; }
.taskbar .action { width: 66px; margin-right: 5px; border-right: 1px solid #555; }
.action b { position: absolute; right: 12px; bottom: 4px; width: 22px; height: 22px; border: 1px solid #888; border-radius: 50%; background: #222; font-size: 13px; line-height: 20px; }
```
